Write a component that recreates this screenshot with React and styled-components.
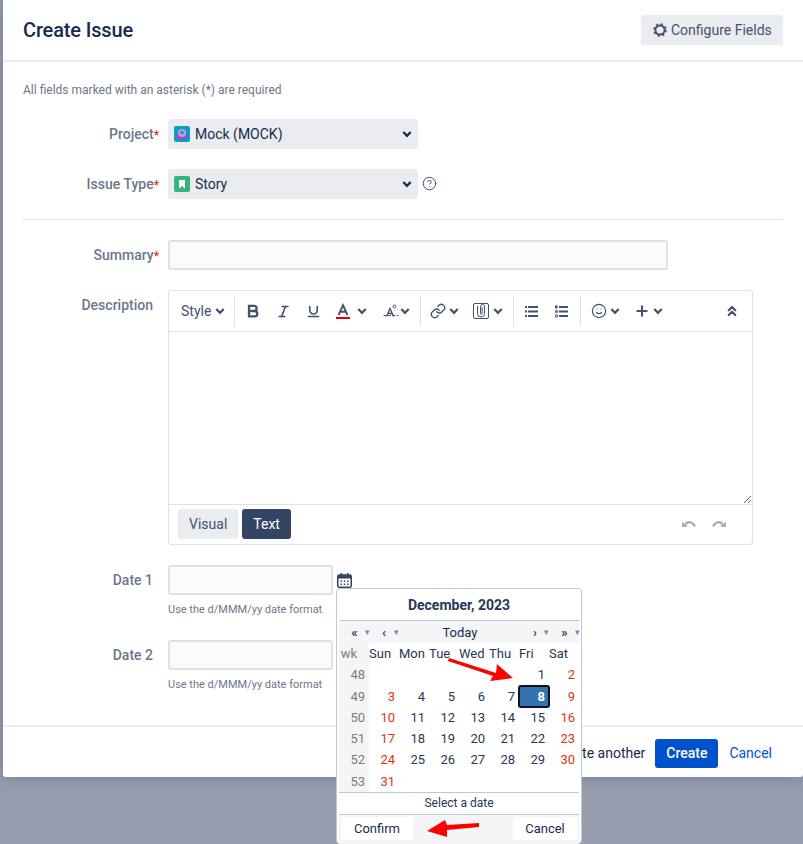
import React from 'react';
import styled, { createGlobalStyle } from 'styled-components';
import { Italic, Underline, Link, Smile, Plus, ChevronsUp, CircleHelp } from 'lucide-react';

const GlobalStyle = createGlobalStyle`
    html, body { margin: 0; padding: 0; }
    body {
        font-family: Roboto, "Liberation Sans", sans-serif;
        font-size: 14px;
        color: #172b4d;
    }
    * { box-sizing: border-box; }
`;

const Page = styled.div`
    position: relative;
    width: 803px;
    height: 844px;
    overflow: hidden;
    background: #959dae;
`;

const Dialog = styled.div`
    display: flex;
    flex-direction: column;
    width: 800px;
    height: 777px;
    margin-left: 3px;
    background: #fff;
    border-radius: 0 0 3px 3px;
    box-shadow: 0 0 14px rgba(9, 30, 66, 0.25);
`;

const Header = styled.header`
    display: flex;
    align-items: center;
    justify-content: space-between;
    height: 62px;
    padding: 0 20px;
    border-bottom: 2px solid #ebecf0;
`;

const Title = styled.h2`
    margin: 0;
    font-size: 20px;
    font-weight: 500;
    letter-spacing: -0.16px;
    color: #172b4d;
`;

const ConfigureButton = styled.button`
    display: flex;
    align-items: center;
    gap: 3px;
    width: 142px;
    height: 30px;
    padding: 0 11px;
    border: 0;
    border-radius: 3px;
    background: #ebecf0;
    color: #42526e;
    font: 14px Roboto, sans-serif;
`;

const Body = styled.div`
    flex: 1;
    padding: 20px 20px 0;
`;

const Note = styled.p`
    margin: 0 0 21px;
    font-size: 12px;
    line-height: 16px;
    color: #6b778c;
`;

const Row = styled.div`
    display: flex;
    gap: 9px;
    margin-bottom: ${props => props.$after || 20}px;
`;

const Label = styled.label`
    flex: none;
    width: 136px;
    height: 30px;
    padding-right: ${props => (props.$required ? 0 : 6)}px;
    text-align: right;
    line-height: 30px;
    font-weight: 500;
    color: #6b778c;
`;

const Required = styled.span`
    color: #de350b;
    font-size: 12px;
    line-height: 12px;
`;

const Control = styled.div`
    position: relative;
    display: flex;
    flex-wrap: wrap;
    align-items: center;
    flex: 1;
`;

const Select = styled.div`
    display: flex;
    align-items: center;
    width: 250px;
    height: 30px;
    padding: 0 6px;
    border-radius: 3px;
    background: #ebecf0;
    color: #172b4d;
`;

const SelectText = styled.span`
    flex: 1;
    margin-left: 5px;
`;

const Help = styled(CircleHelp)`
    margin: -1px 0 0 4px;
    color: #42526e;
`;

const Divider = styled.hr`
    height: 1px;
    margin: 0 0 20px;
    border: 0;
    background: #dfe1e6;
`;

const Input = styled.input`
    display: block;
    width: ${props => props.$width}px;
    height: 30px;
    border: 2px solid #dfe1e6;
    border-radius: 3px;
    background: #fafbfc;
    outline: none;
`;

const Hint = styled.div`
    width: 100%;
    margin-top: 8px;
    font-size: 11px;
    line-height: 14px;
    color: #6b778c;
`;

const Editor = styled.div`
    width: 585px;
    border: 1px solid #dfe1e6;
    border-radius: 3px;
`;

const Toolbar = styled.div`
    display: flex;
    align-items: center;
    height: 41px;
    border-bottom: 1px solid #dfe1e6;
    color: #42526e;
`;

const ToolGroup = styled.div`
    display: flex;
    align-items: center;
    flex: none;
    width: ${props => props.$width}px;
    height: 30px;
    padding-left: ${props => props.$pad || 0}px;
    border-right: ${props => (props.$last ? '0' : '1px solid #dfe1e6')};
`;

const StyleText = styled.span`
    margin: 0 4px 0 12px;
    color: #42526e;
`;

const Tool = styled.span`
    display: flex;
    align-items: center;
    justify-content: center;
    flex: none;
    width: ${props => props.$width || 30}px;
`;

const DropTool = styled.span`
    display: flex;
    align-items: center;
    flex: none;
    gap: ${props => props.$gap}px;
    margin-left: ${props => props.$left}px;
`;

const Collapse = styled.span`
    display: flex;
    margin-left: auto;
    margin-right: 12px;
`;

const TextArea = styled.textarea`
    display: block;
    width: 100%;
    height: 172px;
    min-width: 100%;
    max-width: 100%;
    padding: 6px;
    border: 0;
    outline: none;
    resize: vertical;
`;

const ModeBar = styled.div`
    display: flex;
    align-items: center;
    gap: 4px;
    height: 40px;
    padding: 0 26px 2px 9px;
    border-top: 1px solid #dfe1e6;
`;

const ModeButton = styled.button`
    height: 30px;
    padding: 0 11px;
    border: 0;
    border-radius: 3px;
    background: ${props => (props.$active ? '#344563' : '#ebecf0')};
    color: ${props => (props.$active ? '#fff' : '#42526e')};
    font: 14px Roboto, sans-serif;
`;

const History = styled.div`
    display: flex;
    gap: 16px;
    margin-left: auto;
`;

const CalendarWrap = styled.span`
    display: flex;
    margin-left: 4px;
`;

const Footer = styled.footer`
    display: flex;
    align-items: center;
    justify-content: flex-end;
    height: 52px;
    padding: 2px 31px 0 0;
    border-top: 2px solid #ebecf0;
`;

const CreateAnother = styled.label`
    display: flex;
    align-items: center;
    gap: 6px;
    margin-right: 10px;
    color: #172b4d;
`;

const CreateButton = styled.button`
    width: 63px;
    height: 29px;
    border: 0;
    border-radius: 3px;
    background: #0052cc;
    color: #fff;
    font: 500 14px Roboto, sans-serif;
`;

const CancelLink = styled.a`
    margin-left: 11px;
    color: #0052cc;
`;

/* date picker popup, sits over the form and the footer */
const Popup = styled.div`
    position: absolute;
    top: 23px;
    left: 168px;
    z-index: 10;
    width: 246px;
    height: 256px;
    padding: 0 2px;
    border: 1px solid #c1c7d0;
    border-radius: 4px;
    background: #fff;
`;

const PopupTitle = styled.div`
    height: 32px;
    border-bottom: 1px solid #c1c7d0;
    text-align: center;
    line-height: 32px;
    font-weight: 700;
    color: #253858;
`;

const NavRow = styled.div`
    display: flex;
    align-items: center;
    height: 22px;
    padding-left: 8px;
    background: #f4f5f7;
    font-size: 13px;
    color: #172b4d;
`;

const NavItem = styled.span`
    flex: none;
    width: ${props => props.$width}px;
    margin-left: ${props => props.$left || 0}px;
    text-align: center;
    font-weight: ${props => (props.$today ? 400 : 500)};
`;

const NavDrop = styled.span`
    flex: none;
    width: ${props => props.$width}px;
    margin-left: ${props => props.$left || 0}px;
    text-align: center;
    font-size: 9px;
    color: #7a869a;
`;

const Grid = styled.div`
    display: grid;
    grid-template-columns: 30px repeat(7, 30px);
    grid-auto-rows: 21.3px;
    width: 240px;
    font-size: 13px;
    line-height: 21px;
`;

const WeekCell = styled.div`
    padding-right: ${props => (props.$head ? 12 : 4)}px;
    text-align: right;
    background: #f4f5f7;
    color: #7a7a7a;
`;

const DayName = styled.div`
    color: #253858;
`;

const Day = styled.div`
    padding-right: 4px;
    text-align: right;
    color: ${props => (props.$weekend ? '#de350b' : '#253858')};
`;

const SelectedDay = styled.div`
    margin: -1px;
    padding-right: 3px;
    border: 2px solid #0b1220;
    border-radius: 3px;
    text-align: right;
    line-height: 19px;
    background: #3572b0;
    color: #fff;
    font-weight: 700;
`;

const Status = styled.div`
    height: 23px;
    border-top: 1px solid #c1c7d0;
    border-bottom: 1px solid #c1c7d0;
    text-align: center;
    font-size: 12px;
    line-height: 21px;
    color: #253858;
`;

const PopupButtons = styled.div`
    display: flex;
    justify-content: space-between;
    height: 30px;
    padding: 2px;
    background: #f4f5f7;
    font-size: 13px;
`;

const PopupButton = styled.span`
    width: ${props => props.$width}px;
    height: 23px;
    background: #fff;
    text-align: center;
    line-height: 23px;
    color: #172b4d;
`;

const Arrows = styled.svg`
    position: absolute;
    top: -1px;
    left: -1px;
    pointer-events: none;
`;

const Gear = () => (
    <svg width="16" height="16" viewBox="0 0 16 16" fill="none" stroke="#42526e">
        <circle cx="8" cy="8" r="4.6" strokeWidth="2" />
        <circle cx="8" cy="8" r="6" strokeWidth="1.6" strokeDasharray="2.2 2.51" />
    </svg>
);

const ProjectAvatar = () => (
    <svg width="16" height="16" viewBox="0 0 16 16">
        <rect width="16" height="16" rx="2" fill="#0a9fc0" />
        <ellipse cx="8" cy="10" rx="6" ry="4" fill="#8f4fc4" />
        <circle cx="8" cy="7" r="4" fill="#b9a4e8" />
        <circle cx="8" cy="6.5" r="2" fill="#5b7fd0" />
    </svg>
);

const StoryIcon = () => (
    <svg width="16" height="16" viewBox="0 0 16 16">
        <rect width="16" height="16" rx="2" fill="#36b37e" />
        <path d="M5 4h6v8.5L8 10l-3 2.5z" fill="#fff" />
    </svg>
);

const Chevron = () => (
    <svg width="10" height="10" viewBox="0 0 10 10" fill="none" stroke="currentColor" strokeWidth="2.2">
        <path d="M1.3 3L5 6.8 8.7 3" />
    </svg>
);

const BoldIcon = () => (
    <svg width="16" height="16" viewBox="0 0 16 16" fill="none" stroke="#42526e" strokeWidth="2.3">
        <path d="M4 2.8h5a2.6 2.6 0 0 1 0 5.2H4zM4 8h5.6a2.7 2.7 0 0 1 0 5.4H4zM4 1.7v12.8" />
    </svg>
);

const TextColorIcon = () => (
    <svg width="16" height="16" viewBox="0 0 16 16" fill="none">
        <path d="M3.6 12L8 2.2 12.4 12M5.2 8.8h5.6" stroke="#42526e" strokeWidth="1.9" />
        <rect x="1" y="14" width="14" height="2" fill="#e60000" />
    </svg>
);

const ClearFormatIcon = () => (
    <svg width="16" height="16" viewBox="0 0 16 16" fill="none" stroke="#42526e">
        <path d="M3.5 13.5L7 5.5l3.5 8M5 10.5h4" strokeWidth="1.4" />
        <circle cx="11.5" cy="3.5" r="1.5" strokeWidth="1" />
        <path d="M0.5 12.5h15" strokeWidth="1" strokeDasharray="3 1.5" />
    </svg>
);

const AttachIcon = () => (
    <svg width="16" height="16" viewBox="0 0 16 16" fill="none" stroke="#42526e">
        <rect x="0.5" y="0.5" width="15" height="15" rx="1.5" />
        <path d="M4.5 3v7.5a3.5 3.5 0 0 0 7 0V3.5a2 2 0 0 0-4 0v7a.8.8 0 0 0 1.6 0V4" strokeWidth="1" />
    </svg>
);

const ListIcon = () => (
    <svg width="16" height="16" viewBox="0 0 16 16" fill="#42526e">
        <rect x="2" y="3" width="2" height="2" />
        <rect x="5" y="3" width="10" height="2" />
        <rect x="2" y="7.5" width="2" height="2" />
        <rect x="5" y="7.5" width="10" height="2" />
        <rect x="2" y="12" width="2" height="2" />
        <rect x="5" y="12" width="10" height="2" />
    </svg>
);

const OrderedIcon = () => (
    <svg width="16" height="16" viewBox="0 0 16 16" fill="#42526e">
        <rect x="2" y="2.5" width="2.5" height="3" />
        <rect x="2" y="7" width="3" height="3" opacity="0.7" />
        <rect x="2" y="11.5" width="3" height="3" opacity="0.7" />
        <rect x="6" y="3" width="9" height="2" />
        <rect x="6" y="7.5" width="9" height="2" />
        <rect x="6" y="12" width="9" height="2" />
    </svg>
);

const UndoIcon = () => (
    <svg width="14" height="12" viewBox="0 0 14 12" fill="none">
        <path d="M3 7.5C5 2.5 10 3 13 8.5" stroke="#a5adba" strokeWidth="2.2" />
        <path d="M0 3.5v5.5h5.5z" fill="#a5adba" />
    </svg>
);

const RedoIcon = () => (
    <svg width="14" height="12" viewBox="0 0 14 12" fill="none">
        <path d="M11 7.5C9 2.5 4 3 1 8.5" stroke="#a5adba" strokeWidth="2.2" />
        <path d="M14 3.5v5.5H8.5z" fill="#a5adba" />
    </svg>
);

const CalendarIcon = () => (
    <svg width="15" height="15" viewBox="0 0 15 15">
        <rect x="0.75" y="2" width="13.5" height="12.25" rx="1.5" fill="none" stroke="#344563" strokeWidth="1.5" />
        <rect x="1" y="2" width="13" height="3.5" fill="#344563" />
        <rect x="3.5" y="0" width="1.6" height="3" fill="#344563" />
        <rect x="9.9" y="0" width="1.6" height="3" fill="#344563" />
        <path d="M3.5 7.5h1.5v1.5H3.5zM6.75 7.5h1.5v1.5h-1.5zM10 7.5h1.5v1.5H10zM3.5 10.5h1.5v1.5H3.5zM6.75 10.5h1.5v1.5h-1.5zM10 10.5h1.5v1.5H10z" fill="#344563" />
    </svg>
);

const weeks = [
    [48, '', '', '', '', '', 1, 2],
    [49, 3, 4, 5, 6, 7, 8, 9],
    [50, 10, 11, 12, 13, 14, 15, 16],
    [51, 17, 18, 19, 20, 21, 22, 23],
    [52, 24, 25, 26, 27, 28, 29, 30],
    [53, 31, '', '', '', '', '', '']
];

const dayNames = ['Sun', 'Mon', 'Tue', 'Wed', 'Thu', 'Fri', 'Sat'];

const DatePopup = () => (
    <Popup>
        <PopupTitle>December, 2023</PopupTitle>
        <NavRow>
            <NavItem $width={15}>«</NavItem>
            <NavDrop $width={8} $left={1}>▾</NavDrop>
            <NavItem $width={18} $left={4}>‹</NavItem>
            <NavDrop $width={6}>▾</NavDrop>
            <NavItem $width={122} $today>Today</NavItem>
            <NavItem $width={12} $left={8}>›</NavItem>
            <NavDrop $width={10}>▾</NavDrop>
            <NavItem $width={19} $left={4}>»</NavItem>
            <NavDrop $width={6}>▾</NavDrop>
        </NavRow>
        <Grid>
            <WeekCell $head>wk</WeekCell>
            {dayNames.map(name => <DayName key={name}>{name}</DayName>)}
            {weeks.map(([week, ...days]) => (
                <React.Fragment key={week}>
                    <WeekCell>{week}</WeekCell>
                    {days.map((day, i) => (
                        day === 8
                            ? <SelectedDay key={i}>{day}</SelectedDay>
                            : <Day key={i} $weekend={i === 0 || i === 6}>{day}</Day>
                    ))}
                </React.Fragment>
            ))}
        </Grid>
        <Status>Select a date</Status>
        <PopupButtons>
            <PopupButton $width={72}>Confirm</PopupButton>
            <PopupButton $width={64}>Cancel</PopupButton>
        </PopupButtons>
        <Arrows width="246" height="256" viewBox="0 0 246 256">
            <path d="M113 70L160 85L161 76L177 90L154 93L157 88L112 73z" fill="#f00" />
            <path d="M91 243L109 232L111 237L143 235L143 239L111 242L111 249z" fill="#f00" />
        </Arrows>
    </Popup>
);

const App = () => (
    <Page>
        <GlobalStyle />
        <Dialog>
            <Header>
                <Title>Create Issue</Title>
                <ConfigureButton><Gear /> Configure Fields</ConfigureButton>
            </Header>
            <Body>
                <Note>All fields marked with an asterisk (*) are required</Note>
                <Row>
                    <Label $required>Project<Required>*</Required></Label>
                    <Control>
                        <Select>
                            <ProjectAvatar />
                            <SelectText>Mock (MOCK)</SelectText>
                            <Chevron />
                        </Select>
                    </Control>
                </Row>
                <Row>
                    <Label $required>Issue Type<Required>*</Required></Label>
                    <Control>
                        <Select>
                            <StoryIcon />
                            <SelectText>Story</SelectText>
                            <Chevron />
                        </Select>
                        <Help size={15} strokeWidth={1.6} />
                    </Control>
                </Row>
                <Divider />
                <Row>
                    <Label $required>Summary<Required>*</Required></Label>
                    <Control><Input $width={500} /></Control>
                </Row>
                <Row>
                    <Label>Description</Label>
                    <Editor>
                        <Toolbar>
                            <ToolGroup $width={66}>
                                <StyleText>Style</StyleText>
                                <Chevron />
                            </ToolGroup>
                            <ToolGroup $width={186} $pad={3}>
                                <Tool><BoldIcon /></Tool>
                                <Tool><Italic size={15} strokeWidth={2.6} /></Tool>
                                <Tool><Underline size={15} strokeWidth={2.6} /></Tool>
                                <DropTool $left={7} $gap={6}><TextColorIcon /><Chevron /></DropTool>
                                <DropTool $left={16} $gap={1}><ClearFormatIcon /><Chevron /></DropTool>
                            </ToolGroup>
                            <ToolGroup $width={93}>
                                <DropTool $left={9} $gap={3}><Link size={16} strokeWidth={2} /><Chevron /></DropTool>
                                <DropTool $left={14} $gap={4}><AttachIcon /><Chevron /></DropTool>
                            </ToolGroup>
                            <ToolGroup $width={67} $pad={2}>
                                <Tool><ListIcon /></Tool>
                                <Tool><OrderedIcon /></Tool>
                            </ToolGroup>
                            <ToolGroup $width={90} $last>
                                <DropTool $left={10} $gap={3}><Smile size={16} strokeWidth={1.7} /><Chevron /></DropTool>
                                <DropTool $left={14} $gap={3}><Plus size={16} strokeWidth={3} /><Chevron /></DropTool>
                            </ToolGroup>
                            <Collapse><ChevronsUp size={16} strokeWidth={3.2} /></Collapse>
                        </Toolbar>
                        <TextArea />
                        <ModeBar>
                            <ModeButton>Visual</ModeButton>
                            <ModeButton $active>Text</ModeButton>
                            <History>
                                <UndoIcon />
                                <RedoIcon />
                            </History>
                        </ModeBar>
                    </Editor>
                </Row>
                <Row $after={23}>
                    <Label>Date 1</Label>
                    <Control>
                        <Input $width={165} />
                        <CalendarWrap><CalendarIcon /></CalendarWrap>
                        <Hint>Use the d/MMM/yy date format</Hint>
                        <DatePopup />
                    </Control>
                </Row>
                <Row>
                    <Label>Date 2</Label>
                    <Control>
                        <Input $width={165} />
                        <Hint>Use the d/MMM/yy date format</Hint>
                    </Control>
                </Row>
            </Body>
            <Footer>
                <CreateAnother><input type="checkbox" />Create another</CreateAnother>
                <CreateButton>Create</CreateButton>
                <CancelLink>Cancel</CancelLink>
            </Footer>
        </Dialog>
    </Page>
);

export default App;
